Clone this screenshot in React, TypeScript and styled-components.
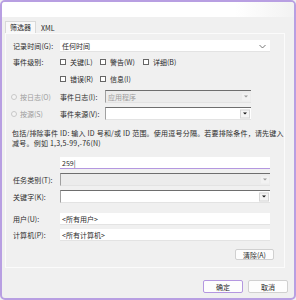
import React from 'react';
import styled, { createGlobalStyle } from 'styled-components';

const Global = createGlobalStyle`
  html, body { margin: 0; padding: 0; background: #f0f0f0; }
  body { font-family: "Noto Sans CJK SC", "Noto Sans", sans-serif; font-size: 7px; color: #2a2a2a; }
`;

const Window = styled.div`
  box-sizing: border-box;
  width: 296px;
  height: 300px;
  border: 2px solid #b89fe2;
  border-radius: 5px;
  background: #f0f0f0;
  display: flex;
  flex-direction: column;
  overflow: hidden;
`;

const TitleBar = styled.div`
  height: 15px;
  background: linear-gradient(to right, #ffffff 80%, #f2f2f2);
`;

const TabStrip = styled.div`
  display: flex;
  align-items: flex-end;
  height: 12px;
  margin-top: 4px;
  padding-left: 3px;
`;

const Tab = styled.div<{ active?: boolean }>`
  box-sizing: border-box;
  height: ${p => (p.active ? 12 : 11)}px;
  padding: 0 4px;
  line-height: 11px;
  background: ${p => (p.active ? '#f9f9f9' : 'transparent')};
  border: 1px solid ${p => (p.active ? '#d9d9d9' : 'transparent')};
  border-bottom: none;
  white-space: nowrap;
`;

const Panel = styled.div`
  box-sizing: border-box;
  margin: 0 9px 0 3px;
  height: 235px;
  border: 1px solid #fbfbfb;
  padding: 6px 14px 0 7px;
  display: flex;
  flex-direction: column;
`;

const Row = styled.div<{ top?: number; h?: number }>`
  display: grid;
  grid-template-columns: 47px 1fr;
  align-items: center;
  margin-top: ${p => p.top ?? 0}px;
  height: ${p => p.h ?? 12}px;
`;

const Label = styled.span<{ disabled?: boolean }>`
  white-space: nowrap;
  letter-spacing: 0.1px;
  color: ${p => (p.disabled ? '#9c9c9c' : '#2a2a2a')};
`;

const Field = styled.div<{ disabled?: boolean; sunken?: boolean; focus?: boolean }>`
  box-sizing: border-box;
  position: relative;
  height: 100%;
  display: flex;
  align-items: center;
  padding-left: 2px;
  background: ${p => (p.disabled ? '#ececec' : '#ffffff')};
  border-top: ${p => (p.sunken ? '1.5px solid #6e6e6e' : 'none')};
  border-left: ${p => (p.sunken ? '1px solid #a0a0a0' : 'none')};
  border-bottom: ${p => (p.focus ? '1.5px solid #b497e0' : '1px solid #e3e3e3')};
  color: ${p => (p.disabled ? '#9c9c9c' : '#2a2a2a')};
  white-space: nowrap;
`;

const ArrowBox = styled.div<{ dark?: boolean }>`
  position: absolute;
  right: 1px;
  top: 50%;
  transform: translateY(-50%);
  width: 8px;
  height: 7px;
  display: flex;
  align-items: center;
  justify-content: center;
  background: ${p => (p.dark ? '#f4f4f4' : '#f2f2f2')};
  border: ${p => (p.dark ? '1px solid #d6d6d6' : 'none')};
  &::after {
    content: '';
    border-left: 2px solid transparent;
    border-right: 2px solid transparent;
    border-top: 2px solid ${p => (p.dark ? '#111' : '#9a9a9a')};
  }
`;

const Chevron = () => (
  <svg width="7" height="5" viewBox="0 0 7 5" style={{ position: 'absolute', right: 4, top: 4 }}>
    <polyline points="0.5,1 3.5,4 6.5,1" fill="none" stroke="#555" strokeWidth="0.8" />
  </svg>
);

const Checks = styled.div`
  display: grid;
  grid-template-columns: 40px 43px auto;
  align-items: center;
`;

const Check = styled.label`
  display: flex;
  align-items: center;
  gap: 4px;
  white-space: nowrap;
  &::before {
    content: '';
    box-sizing: border-box;
    width: 6px;
    height: 6px;
    border: 1px solid #666;
    background: #fff;
  }
`;

const RadioRow = styled.div<{ top?: number }>`
  display: grid;
  grid-template-columns: 47px 45px 146px;
  align-items: center;
  height: 13px;
  margin-top: ${p => p.top ?? 0}px;
`;

const Radio = styled.label`
  display: flex;
  align-items: center;
  gap: 3px;
  color: #9c9c9c;
  white-space: nowrap;
  margin-left: -2px;
  &::before {
    content: '';
    box-sizing: border-box;
    width: 6px;
    height: 6px;
    border-radius: 50%;
    border: 1px solid #c8c8c8;
    background: #f4f4f4;
  }
`;

const Desc = styled.div`
  margin-top: 9px;
  line-height: 9.5px;
  letter-spacing: 0.22px;
  white-space: nowrap;
  margin-left: -1px;
`;

const ClearRow = styled.div`
  display: flex;
  justify-content: flex-end;
  margin-top: 8px;
  margin-right: -4px;
`;

const Button = styled.div<{ primary?: boolean }>`
  box-sizing: border-box;
  display: flex;
  align-items: center;
  justify-content: center;
  background: #fdfdfd;
  border: 1px solid ${p => (p.primary ? '#b497e0' : '#d0d0d0')};
  border-radius: 2px;
  white-space: nowrap;
`;

const ClearButton = styled(Button)`
  width: 39px;
  height: 11px;
`;

const Footer = styled.div`
  display: flex;
  justify-content: flex-end;
  gap: 5px;
  margin-top: 12px;
  padding-right: 6px;
`;

const FooterButton = styled(Button)`
  width: 40px;
  height: 13px;
`;

export default function App() {
  return (
    <>
      <Global />
      <Window>
        <TitleBar />
        <TabStrip>
          <Tab active>筛选器</Tab>
          <Tab>XML</Tab>
        </TabStrip>
        <Panel>
          <Row h={12}>
            <Label>记录时间(G):</Label>
            <Field>
              任何时间
              <Chevron />
            </Field>
          </Row>
          <Row top={5} h={10}>
            <Label>事件级别:</Label>
            <Checks>
              <Check>关键(L)</Check>
              <Check>警告(W)</Check>
              <Check>详细(B)</Check>
            </Checks>
          </Row>
          <Row top={7} h={10}>
            <span />
            <Checks>
              <Check>错误(R)</Check>
              <Check>信息(I)</Check>
            </Checks>
          </Row>
          <RadioRow top={6}>
            <Radio>按日志(O)</Radio>
            <Label>事件日志(I):</Label>
            <Field disabled sunken>
              应用程序
              <ArrowBox />
            </Field>
          </RadioRow>
          <RadioRow top={4}>
            <Radio>按源(S)</Radio>
            <Label>事件来源(V):</Label>
            <Field sunken>
              <ArrowBox dark />
            </Field>
          </RadioRow>
          <Desc>
            包括/排除事件 ID: 输入 ID 号和/或 ID 范围。使用逗号分隔。若要排除条件，请先键入
            <br />
            减号。例如 1,3,5-99,-76(N)
          </Desc>
          <Row top={9} h={12}>
            <span />
            <Field focus>259|</Field>
          </Row>
          <Row top={4} h={13}>
            <Label>任务类别(T):</Label>
            <Field disabled sunken>
              <ArrowBox />
            </Field>
          </Row>
          <Row top={4} h={13}>
            <Label>关键字(K):</Label>
            <Field sunken>
              <ArrowBox dark />
            </Field>
          </Row>
          <Row top={10} h={12}>
            <Label>用户(U):</Label>
            <Field>&lt;所有用户&gt;</Field>
          </Row>
          <Row top={4} h={12}>
            <Label>计算机(P):</Label>
            <Field>&lt;所有计算机&gt;</Field>
          </Row>
          <ClearRow>
            <ClearButton>清除(A)</ClearButton>
          </ClearRow>
        </Panel>
        <Footer>
          <FooterButton primary>确定</FooterButton>
          <FooterButton>取消</FooterButton>
        </Footer>
      </Window>
    </>
  );
}
